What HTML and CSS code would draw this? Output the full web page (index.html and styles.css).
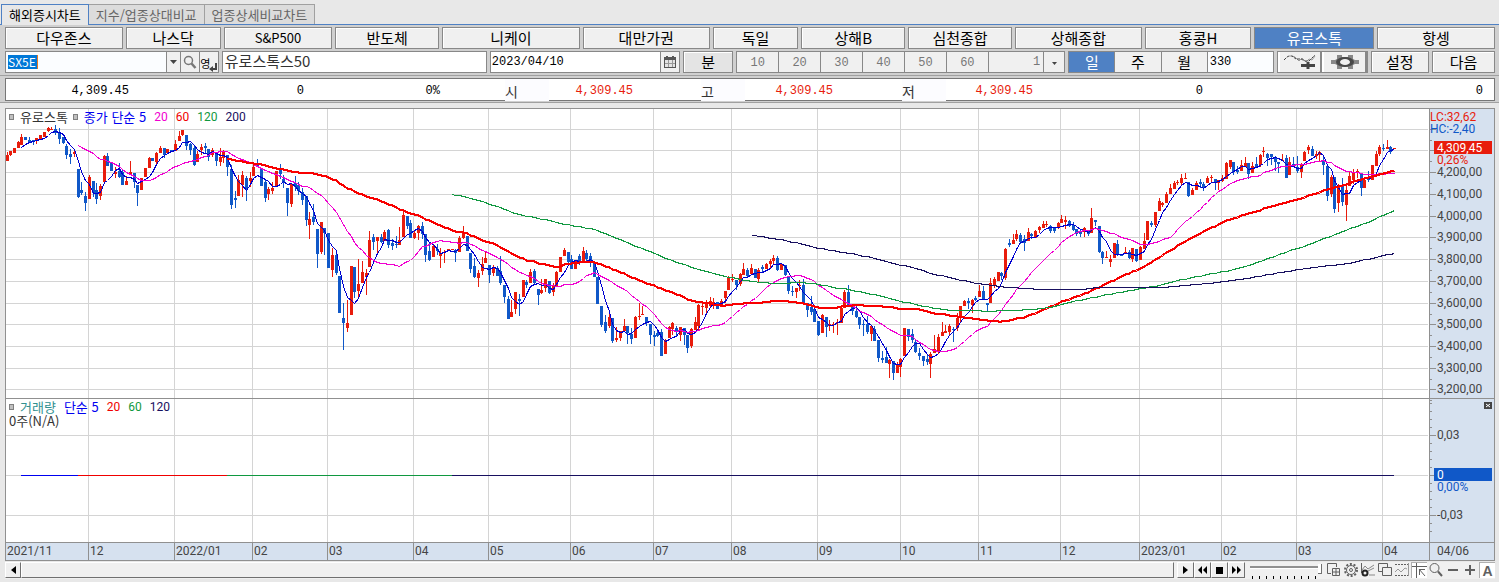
FILE: index.html
```html
<!DOCTYPE html>
<html lang="ko">
<head>
<meta charset="UTF-8" />
<title>해외증시차트</title>
<meta name="viewport" content="width=device-width, initial-scale=1">
<link rel="stylesheet" href="styles.css">
</head>
<body>

<nav class="tabs">
    <a href="#" class="tab active">해외증시차트</a>
    <a href="#" class="tab">지수/업종상대비교</a>
    <a href="#" class="tab">업종상세비교차트</a>
</nav>

<div class="toolbar">
    <div class="markets">
        <button>다우존스</button>
        <button>나스닥</button>
        <button class="latin">S&amp;P500</button>
        <button>반도체</button>
        <button>니케이</button>
        <button>대만가권</button>
        <button>독일</button>
        <button>상해B</button>
        <button>심천종합</button>
        <button>상해종합</button>
        <button>홍콩H</button>
        <button class="on">유로스톡</button>
        <button>항셍</button>
    </div>

    <div class="controls">
        <div class="group symbol">
            <label class="symbol-field"><input type="text" value="SX5E" size="4" aria-label="종목코드"></label>
            <button class="drop" aria-label="목록"><svg width="7" height="4"><path d="M0 0h7L3.500 4z" fill="#444"/></svg></button>
            <button class="search" aria-label="검색">
                <svg width="14" height="14" fill="none" stroke="#777"><circle cx="5.500" cy="5.500" r="4" stroke-width="1.500"/><path d="M8.500 8.500l4 4.500" stroke-width="2.500"/></svg>
            </button>
            <button class="lang" aria-label="영문 전환"><span>영</span><svg width="8" height="9"><path d="M6 0h2v7H4v2L0 6l4-3v2h2z" fill="#444"/></svg></button>
        </div>
        <input class="box name" type="text" value="유로스톡스50" aria-label="종목명">
        <div class="group date">
            <input type="text" value="2023/04/10" aria-label="일자">
            <button aria-label="달력"><svg width="12" height="12" shape-rendering="crispEdges"><path d="M0 1h2V0h2v1h4V0h2v1h2v11H0z" fill="#555"/><path d="M1 4h10v7H1z" fill="#e4e4e4"/><path d="M4 4v7M8 4v7M1 7.500h10" stroke="#999"/></svg></button>
        </div>
        <button class="box minute">분</button>
        <div class="group minutes">
            <button disabled>10</button>
            <button disabled>20</button>
            <button disabled>30</button>
            <button disabled>40</button>
            <button disabled>50</button>
            <button disabled>60</button>
            <input type="text" value="1" disabled aria-label="분 간격">
            <button class="drop" aria-label="분 선택"><svg width="5" height="3"><path d="M0 0h5L2.500 3z" fill="#444"/></svg></button>
        </div>
        <div class="group period">
            <button class="on">일</button>
            <button>주</button>
            <button>월</button>
            <input type="text" value="330" aria-label="조회 개수">
        </div>
        <div class="group tools">
            <button aria-label="지표 추가">
                <svg width="34" height="16" fill="none"><path d="M9 2l3 1 4 4 3-3 4 4 3-3 3 1 3-4" stroke="#999"/><path d="M1 6l3-3 2-1h3l4 3M14 5h4l4 2h4l6-6" stroke="#444" stroke-dasharray="3 1"/><path d="M25 8v7M18 11.500h14" stroke="#444" stroke-width="3"/></svg>
            </button>
            <button aria-label="차트 설정">
                <svg width="28" height="16"><path d="M6 1h5v2h6V1h5v4l2 1h4v4h-4l-2 1v4h-5v-2h-6v2H6v-4l-2-1H0V6h4l2-1z" fill="#888"/><ellipse cx="14" cy="8" rx="9" ry="5" fill="#484848"/><ellipse cx="14" cy="8" rx="5" ry="3" fill="#f0f0f0"/></svg>
            </button>
        </div>
        <button class="box setup">설정</button>
        <button class="box next">다음</button>
    </div>
</div>

<div class="quote-wrap">
    <div class="quote">
        <span>4,309.45</span>
        <span>0</span>
        <span>0%</span>
        <b>시</b>
        <span class="up">4,309.45</span>
        <b>고</b>
        <span class="up">4,309.45</span>
        <b>저</b>
        <span class="up">4,309.45</span>
        <span>0</span>
        <span>0</span>
    </div>
</div>

<main class="chart">
    <div class="panes">
        <div class="plot">
            <svg id="plot" viewBox="6 109 1423 433" preserveAspectRatio="none" shape-rendering="crispEdges"></svg>
            <div class="legend price">
                <i></i><span class="title">유로스톡</span><i></i>
                <span class="c5">종가 단순 5</span><span class="c20">20</span><span class="c60">60</span><span class="c120">120</span><span class="c200">200</span>
            </div>
            <div class="legend volume">
                <i></i><span class="teal">거래량</span>
                <span class="c5">단순 5</span><span class="c60">20</span><span class="c120">60</span><span class="c200">120</span>
                <p>0주(N/A)</p>
            </div>
        </div>
        <svg id="scale" class="scale" width="65" height="433" viewBox="1429 109 65 433"></svg>
    </div>
    <div class="dates">
        <div class="months" id="months"></div>
        <span class="last">04/06</span>
    </div>
</main>

<footer class="bottom">
    <button class="step" aria-label="왼쪽"><svg width="5" height="8"><path d="M5 0v8L0 4z"/></svg></button>
    <div class="track"></div>
    <div class="play">
        <button aria-label="오른쪽"><svg width="5" height="8"><path d="M0 0v8l5-4z"/></svg></button>
        <button aria-label="뒤로"><svg width="9" height="8"><path d="M4 0v8L0 4zM9 0v8L5 4z"/></svg></button>
        <button aria-label="정지"><svg width="7" height="7"><path d="M0 0h7v7H0z"/></svg></button>
        <button aria-label="앞으로"><svg width="9" height="8"><path d="M0 0v8l4-4zM5 0v8l4-4z"/></svg></button>
    </div>
    <input class="zoom" type="range" min="0" max="10" value="10" aria-label="확대">
    <div class="icons">
        <button aria-label="창 추가"><svg viewBox="0 0 16 16"><path d="M10.500 5V1.500h-9v10H5"/><path d="M6.500 6.500h7v7h-7zM10 6.500v7M6.500 10h7"/></svg></button>
        <button aria-label="환경"><svg viewBox="0 0 16 16"><circle cx="8" cy="8" r="6" stroke-dasharray="2 1.770" stroke-width="2"/><circle cx="8" cy="8" r="4.500"/><circle cx="8" cy="8" r="1.500"/></svg></button>
        <button aria-label="지표"><svg viewBox="0 0 16 16"><path d="M2 8l3-4 3 3 6-4M8 9l6-3M9 13h6" stroke="#888"/><path d="M1.500 1v10"/><circle cx="5" cy="11" r="2.500" stroke="#222" stroke-width="2"/></svg></button>
        <button aria-label="겹치기"><svg viewBox="0 0 16 16"><path d="M5 9.500H1.500v-8h9V5"/><path d="M5.500 5.500h9v8h-9z"/></svg></button>
        <button aria-label="추세"><svg viewBox="0 0 16 16"><path d="M1 2.500h13M1 13.500h13" stroke-dasharray="2 1"/><path d="M1 10l3-3 3 3 4-4 2 1M14.500 1v13" stroke="#999"/></svg></button>
        <button class="on" aria-label="십자선"><svg viewBox="0 0 16 16"><path d="M4.500 0v15M0 3.500h15M7 6l6 7M7.500 12V6.500H13"/></svg></button>
        <button aria-label="돋보기"><svg viewBox="0 0 16 16"><circle cx="6.500" cy="6" r="4.500"/><path d="M10 9.500l4 4.500" stroke-width="2"/></svg></button>
        <button aria-label="축소"><svg viewBox="0 0 16 16"><path d="M3 8h10" stroke-width="2"/></svg></button>
        <button aria-label="확대"><svg viewBox="0 0 16 16"><path d="M3 8h10M8 3v10" stroke-width="2"/></svg></button>
        <button class="on letter">A</button>
    </div>
</footer>

<script src="chart.js"></script>
</body>
</html>
```
FILE: styles.css
```css
* {
  box-sizing: border-box;
}
body {
  margin: 0;
  background-color: #e8e8e8;
  color: #000;
  font-family: 'Noto Sans CJK KR', sans-serif;
  font-size: 15px;
}
button, input {
  margin: 0;
  padding: 0;
  border: none;
  border-radius: 0;
  font: inherit;
  color: inherit;
  min-width: 0;
  outline: none;
}
button {
  display: flex;
  align-items: center;
  justify-content: center;
  background-color: #f0f0f0;
  line-height: 18px;
  white-space: nowrap;
}

/* tabs */
.tabs {
  display: flex;
  height: 25px;
  padding: 4px 0 0 1px;
  border-bottom: 1px solid #4f81c4;
}
.tab {
  height: 20px;
  padding: 0 7px;
  border: 1px solid #a0a0a0;
  border-left: none;
  border-bottom: none;
  background-color: #dcdcdc;
  color: #666;
  font-size: 13px;
  line-height: 19px;
  text-decoration: none;
}
.tab.active {
  height: 21px;
  border: 1px solid #4f81c4;
  border-bottom: none;
  background-color: #e8e8e8;
  color: #000;
}

/* toolbar */
.toolbar {
  display: grid;
  gap: 2px;
  padding: 2px 4px 2px 5px;
  background-color: #d0d0d0;
  border-bottom: 1px solid #a0a0a0;
}
.markets {
  display: grid;
  grid-template-columns: 118fr 95fr 109fr 104fr 138fr 127fr 86fr 104fr 104fr 127fr 107fr 120fr 118fr;
  gap: 3px;
}
.markets button, .box, .group {
  height: 22px;
  border: 1px solid #888;
}
.markets button, .minute, .setup, .next {
  box-shadow: inset 1px 1px #fff;
}
.markets .latin {
  font-size: 13px;
}
button.on, .markets .on {
  background-color: #4f81c4;
  color: #fff;
  box-shadow: none;
}
.controls {
  display: flex;
  gap: 3px;
}
.group {
  display: flex;
  background-color: #fff;
}
.group > * + * {
  border-left: 1px solid #888;
}
.controls input {
  background-color: #fff;
  line-height: 20px;
}
.symbol {
  flex: 215;
}
.symbol-field {
  flex: 1;
  display: flex;
  align-items: center;
  padding-left: 2px;
  background-color: #fbfdff;
}
.controls .symbol-field input {
  width: 30px;
  height: 14px;
  background-color: #0078d7;
  border-right: 1px solid #e87820;
  color: #fff;
  font-size: 12px;
  line-height: 14px;
}
.drop {
  width: 14px;
}
.search, .lang {
  width: 19px;
}
.lang {
  align-items: flex-end;
  font-size: 11px;
}
.lang span {
  width: 9px;
}
.name {
  flex: 265;
  padding: 0 0 3px 2px;
  color: #333;
}
.date {
  flex: 191;
}
.date input {
  flex: 1;
  padding-left: 1px;
  font: 12px 'Liberation Mono', monospace;
}
.date button {
  width: 19px;
}
.minute {
  flex: 49;
  background-color: #e4e4e4;
}
.minutes {
  flex: 332;
  color: #777;
  font: 12px 'Liberation Mono', monospace;
}
.minutes button {
  flex: 43;
  padding-top: 2px;
}
.minutes input {
  flex: 54;
  padding-right: 3px;
  background-color: #f0f0f0;
  text-align: right;
}
.minutes .drop {
  flex: 0 0 21px;
}
.period {
  flex: 207;
}
.period button {
  flex: 47;
}
.period input {
  flex: 66;
  padding-left: 2px;
  background-color: #fbfdff;
  font: 12px 'Liberation Mono', monospace;
}
.tools {
  flex: 90;
}
.tools button {
  flex: 1;
  border-left: 2px solid #fff;
  border-right: 2px solid #888;
}
.setup {
  flex: 57;
}
.next {
  flex: 62;
}

/* quote strip */
.quote-wrap {
  padding: 2px 4px 1px 5px;
  background-color: #d0d0d0;
  border-bottom: 1px solid #a0a0a0;
}
.quote {
  display: grid;
  grid-template-columns: 125fr 175fr 136fr 107fr 86fr 110fr 90fr 111fr 89fr 170fr 289fr;
  height: 23px;
  border: 1px solid #777;
  background-color: #fff;
  font: 12px/24px 'Liberation Mono', monospace;
  text-align: right;
}
.quote span {
  padding-right: 2px;
}
.quote span:last-child {
  padding-right: 11px;
}
.quote b {
  justify-self: end;
  width: 44px;
  height: 22px;
  background-color: #fcfcff;
  color: #333;
  font: 14px/24px 'Noto Sans CJK KR', sans-serif;
  text-align: left;
}
.up {
  color: #e81c0c;
}

/* chart */
.chart {
  margin: 5px 4px 0 5px;
  border: 1px solid #909090;
  background-color: #fff;
}
.panes {
  display: flex;
}
.plot {
  position: relative;
  flex: 1;
  height: 433px;
}
.plot svg {
  display: block;
  width: 100%;
  height: 433px;
}
.scale {
  display: block;
  flex: none;
  background-color: #d6e1ef;
  font: 12px Roboto, sans-serif;
}
.legend {
  position: absolute;
  left: 3px;
  display: flex;
  flex-wrap: wrap;
  align-items: center;
  width: 260px;
  font: 13px/16px 'Noto Sans CJK KR', sans-serif;
}
.legend.price {
  top: 0;
}
.legend.volume {
  top: 290px;
}
.legend i {
  width: 5px;
  height: 6px;
  margin-right: 6px;
  background-color: #c0c0c0;
  border: 1px solid #808080;
}
.legend span {
  margin-right: 8px;
}
.legend .title {
  margin-right: 5px;
  color: #333;
}
.legend .c20, .legend .c60, .legend .c120, .legend .c200 {
  font: 12px/16px Roboto, sans-serif;
}
.legend p {
  width: 100%;
  margin: 0;
  color: #333;
  line-height: 12px;
}
.c5 { color: #0000f0; }
.c20 { color: #f000d0; }
.c60 { color: #f00000; }
.c120 { color: #109840; }
.c200 { color: #181060; }
.teal { color: #309090; }

.dates {
  display: flex;
  height: 18px;
  border-top: 1px solid #909090;
  background-color: #d6e1ef;
  color: #444;
  font: 12px/16px Roboto, sans-serif;
}
.months {
  flex: 1;
  display: grid;
  grid-template-columns: 82fr 86fr 78fr 75fr 86fr 75fr 82fr 83fr 78fr 86fr 83fr 78fr 82fr 79fr 82fr 75fr 86fr 47fr;
}
.months span {
  min-width: 0;
  padding-left: 1px;
}
.months span + span {
  border-left: 1px solid #909090;
}
.last {
  width: 65px;
  padding-left: 7px;
  border-left: 1px solid #909090;
}

/* scroll and tool strip */
.bottom {
  display: flex;
  height: 17px;
  margin: 1px 4px 0 5px;
  background-color: #f0f0f0;
}
.step, .track, .play button {
  height: 16px;
  border: 1px solid #fff;
  border-right-color: #707070;
  border-bottom-color: #707070;
  background-color: #f0f0f0;
}
.step {
  width: 16px;
}
.track {
  flex: 1;
}
.play {
  display: flex;
  margin-left: 3px;
}
.play button {
  width: 17px;
}
.zoom {
  appearance: none;
  width: 72px;
  height: 17px;
  margin: 0 4px 0 5px;
  background: repeating-linear-gradient(90deg, transparent 0 2px, #000 2px 3px, transparent 3px 7px) 0 14px / 66px 3px no-repeat;
}
.zoom::-webkit-slider-runnable-track {
  height: 3px;
  margin-bottom: 6px;
  background-color: #909090;
  border-bottom: 1px solid #fff;
}
.zoom::-webkit-slider-thumb {
  appearance: none;
  width: 4px;
  height: 10px;
  margin-top: -2px;
  background-color: #fff;
  border-right: 1px solid #707070;
  border-bottom: 1px solid #707070;
}
.icons {
  display: flex;
  gap: 1px;
}
.icons button {
  width: 16px;
  height: 16px;
}
.icons svg {
  flex: none;
  width: 16px;
  height: 16px;
  fill: none;
  stroke: #606060;
}
.icons .on {
  background-color: #fff;
  border: 1px solid #b0b0b0;
  border-right: none;
  border-bottom: none;
}
.icons .letter {
  color: #606060;
  font: bold 14px/14px 'Liberation Sans', sans-serif;
}
```
FILE: chart.js
```js
// one day per entry: r = up / b = down, then high, top, bottom, low in plot pixels
const days = `
r152,155,161,161 r151,151,155,156 r148,148,153,153 r141,142,148,148 r134,137,145,145 b137,137,140,140
b137,140,142,142 b140,140,142,145 r138,138,141,144 r135,135,139,139 r132,132,137,137 r127,128,131,132
r127,129,130,130 b125,129,133,135 b128,132,139,144 b137,137,143,144 b144,146,155,159 b149,154,157,164
r149,152,154,157 b169,169,197,198 b182,190,193,195 b192,196,203,211 r175,177,199,199 b181,181,193,197
b183,190,199,204 r184,186,196,200 r155,156,182,182 b153,156,166,166 b163,163,171,171 r167,172,174,178
b163,171,177,178 b170,172,185,185 r176,181,185,185 r161,172,174,174 b173,173,182,188 b185,185,193,206
r178,178,190,190 r168,168,177,177 r157,158,168,168 b158,158,161,161 r152,153,162,164 r146,148,153,153
b148,148,155,158 r149,149,153,153 b150,150,152,152 r140,144,151,151 r131,136,141,141 r130,130,135,136
b135,135,146,150 b143,144,150,155 b146,148,165,166 r151,154,162,162 r144,147,150,155 b143,146,148,154
b149,149,157,161 r148,150,155,157 b152,152,161,166 r148,157,162,166 r150,152,158,163 b155,155,167,176
b165,169,205,209 b191,198,200,208 r175,180,196,196 r171,175,185,197 b176,178,188,201 r172,178,181,187
r165,167,176,176 b159,163,167,167 b169,169,186,186 b179,182,198,202 r187,189,194,200 r182,188,191,194
r171,171,186,186 b164,170,174,179 b175,179,183,188 b188,188,203,216 r184,184,204,207 b176,183,187,191
b182,185,191,195 b188,192,200,205 b196,196,220,226 r212,219,225,239 b204,217,222,225 b229,229,254,268
r222,222,252,254 b228,228,233,255 b233,233,268,268 r248,255,270,277 b250,255,273,275 b276,276,313,313
b303,318,323,350 r300,323,328,332 r266,266,315,315 b267,267,292,298 r259,284,291,297 r261,272,283,283
r269,273,277,295 r231,240,267,267 b234,237,242,250 r237,237,241,254 b234,237,242,243 r230,232,241,241
b229,230,245,248 b239,243,246,250 b236,244,245,248 r227,240,245,245 r210,215,237,237 b216,216,226,229
b220,223,238,238 r230,233,238,239 r225,226,233,240 b222,226,234,239 b234,234,255,262 b242,251,260,261
r244,246,257,257 b244,249,251,255 r248,253,256,268 r250,252,253,263 r249,249,250,250 r249,249,250,250
b249,250,253,262 r236,238,252,252 r226,233,238,239 b236,236,251,251 b253,253,269,273 b258,266,277,278
r270,273,278,287 r257,264,271,275 r251,258,263,263 b265,265,275,283 r265,267,273,276 b266,268,276,276
b256,271,283,285 b285,285,297,303 b296,299,319,319 r300,312,317,317 r292,292,309,314 b294,299,301,316
r280,280,297,297 b280,282,285,288 r269,272,283,283 b269,271,283,285 b289,289,295,305 r279,290,293,294
r279,279,288,292 b281,281,293,294 r283,286,292,296 r271,272,287,287 r257,257,272,272 r248,250,256,256
b252,252,262,264 b255,259,269,269 r260,261,269,269 b254,256,263,265 r247,251,262,262 b250,253,259,263
b253,256,262,267 b263,263,277,277 b277,277,304,304 b306,306,325,327 b315,322,331,333 r314,317,326,328
b318,318,341,343 r327,338,340,342 r331,331,338,341 r319,326,331,331 b326,326,333,344 b328,334,339,344
r316,317,338,338 r303,316,317,320 r306,314,315,315 b317,317,322,326 b324,324,335,344 b331,335,337,346
b330,333,336,337 b329,332,356,356 r339,341,354,354 r326,327,338,338 r322,323,329,335 b326,328,332,336
r327,327,335,341 b328,328,335,345 b335,335,348,353 r328,329,346,348 r317,322,330,330 r304,305,326,331
r301,306,307,315 r300,303,308,313 r297,301,306,308 r298,302,305,309 b302,302,309,309 r299,301,307,307
r291,291,298,303 r276,277,290,290 r274,279,280,282 b280,280,285,290 r273,274,284,286 r263,269,275,275
b268,270,276,278 r264,268,274,274 b269,269,278,278 r268,270,279,283 b265,267,269,273 r263,264,269,269
r259,261,264,268 r255,258,261,264 b256,258,270,271 r263,264,270,270 b265,265,275,276 b276,276,291,294
b286,291,292,296 r288,288,292,298 r280,285,286,291 b279,285,304,305 b303,303,310,317 b296,307,312,315
b306,309,322,322 b321,321,335,336 r314,315,333,333 b317,317,327,337 r320,324,326,331 r322,324,325,333
r319,322,323,335 r307,308,323,323 r290,292,308,308 b285,292,307,307 b304,305,311,315 b306,311,317,318
b317,317,325,329 b320,324,325,336 b316,324,332,334 r325,326,334,341 b326,329,341,341 b340,340,358,362
b351,358,360,363 b347,357,363,363 r359,360,364,378 b361,361,373,380 r362,364,373,373 r358,359,367,377
r328,328,356,356 b329,329,337,341 b329,334,340,343 b339,342,352,353 b348,353,356,360 b356,356,361,366
b354,359,362,365 r352,354,364,378 r335,349,353,353 r334,337,351,354 r322,332,336,336 r325,331,333,333
r324,326,332,335 b327,329,330,342 r313,318,328,331 r306,306,317,322 r300,301,306,306 b298,301,303,309
r299,300,305,313 b296,298,300,301 r285,291,297,297 b286,291,299,299 b303,303,305,312 r278,283,303,303
r277,279,286,288 r272,272,281,281 b272,273,276,280 r248,249,278,280 b239,243,245,247 r234,240,244,244
r230,234,239,241 b233,235,242,244 b235,239,243,251 r228,232,241,241 b233,234,236,239 r230,231,238,238
r226,227,230,233 r221,224,228,228 r221,224,225,227 b225,226,231,233 b227,227,231,233 r222,223,228,229
r215,219,223,223 r216,220,222,229 b220,221,226,227 b222,225,230,231 b229,229,234,236 b229,231,234,237
r227,228,232,237 b230,230,234,236 r208,218,233,233 b220,220,222,226 b226,226,252,253 b251,252,258,264
r251,257,258,258 r255,259,262,267 r243,243,258,258 b240,244,255,256 b254,254,256,256 r247,252,253,254
b250,252,258,259 r248,248,259,262 b249,249,261,262 r246,247,260,260 r233,241,249,249 r221,221,240,240
b221,223,225,227 r212,212,225,227 r198,201,211,211 r202,203,205,207 r192,194,203,203 r184,188,194,194
r181,183,189,189 r180,182,183,185 r174,178,183,186 r173,178,179,179 b182,182,196,197 r188,190,195,195
r181,183,190,190 b179,182,184,188 b182,184,188,191 r176,178,183,183 r175,177,178,183 b179,179,182,190
r180,180,183,190 r175,178,181,182 r162,163,179,179 r160,160,167,169 b162,162,172,175 b166,170,172,174
r160,165,171,171 r157,163,167,167 b163,163,174,179 r162,166,173,173 b157,164,167,167 r154,155,165,167
r147,151,152,157 b153,154,158,166 b154,154,157,165 b156,158,162,171 b162,162,164,173 r154,160,161,161
b155,158,178,178 r157,162,175,175 b157,164,167,167 b156,167,171,173 r163,164,172,178 r151,152,161,161
r145,147,150,154 b146,149,156,156 r151,154,156,159 r151,152,155,162 b155,160,165,175 b166,166,196,201
r175,177,194,197 b177,177,209,213 r184,186,203,212 b178,185,202,206 r184,190,205,221 r171,176,186,186
r169,173,180,184 r169,171,173,178 b174,174,188,196 r179,180,188,188 b171,178,180,182 r165,165,180,180
r151,154,166,166 r145,147,154,156 b144,148,149,151 r140,147,149,149 b146,147,152,154 r148,148,149,149
`.trim().split(/\s+/).map((d, i) => {
    const [high, top, bottom, low] = d.slice(1).split(',').map(Number);
    return { up: d[0] === 'r', high, top, bottom, low, x: Math.floor(7 + i * 3.7405) };
});

const monthX = [88, 174, 252, 327, 413, 488, 570, 653, 731, 817, 900, 978, 1060, 1139, 1221, 1296, 1382];
const monthNames = ['2021/11', '12', '2022/01', '02', '03', '04', '05', '06', '07', '08', '09', '10', '11', '12', '2023/01', '02', '03', '04'];
const priceY = [129, 150, 172, 194, 216, 237, 259, 281, 303, 324, 346, 368, 389];

function candles(up) {
    return days.filter(d => d.up === up).map(d =>
        `M${d.x - 1} ${d.top}h3V${d.bottom}h-3zM${d.x} ${d.high}h1V${d.low}h-1z`
    ).join('');
}

function average(n) {
    const close = days.map(d => d.up ? d.top : d.bottom);
    const points = [];
    for (let i = n - 1; i < days.length; i++) {
        const sum = close.slice(i - n + 1, i + 1).reduce((a, b) => a + b, 0);
        points.push(`${days[i].x + 0.5},${Math.round(sum / n) + 0.5}`);
    }
    return points.join(' ');
}

function line(n, color, width) {
    return `<polyline points="${average(n)}" fill="none" stroke="${color}" stroke-width="${width}"/>`;
}

let grid = '';
monthX.forEach(x => grid += `M${x}.5 109V542`);
priceY.concat(435, 475, 515).forEach(y => grid += `M6 ${y}.5H1428`);

document.getElementById('plot').innerHTML = `
    <path d="${grid}" stroke="#d4d4d4"/>
    <path d="M6 398.5H1429" stroke="#909090"/>
    <path d="${candles(true)}" fill="#e81c0c"/>
    <path d="${candles(false)}" fill="#1058c8"/>
    ${line(5, '#0000d0', 1)}
    ${line(20, '#f000d0', 1)}
    ${line(60, '#f80000', 2)}
    ${line(120, '#109840', 1)}
    ${line(200, '#181060', 1)}
    <path d="M21 475.5H78" stroke="#0000f0"/>
    <path d="M78 475.5H227" stroke="#f00000"/>
    <path d="M227 475.5H452" stroke="#109840"/>
    <path d="M452 475.5H1394" stroke="#181060"/>`;

// right hand scale
let ticks = 'M1429.5 109V542M1429 398.5H1494';
let labels = '';
priceY.forEach((y, i) => {
    ticks += `M1430 ${y}.5h6M1430 ${y + 11}.5h2`;
    if (i > 1) labels += `<text x="1437" y="${y + 4}">${Math.floor((44 - i) / 10)},${(44 - i) % 10}00,00</text>`;
});
for (let y = 403; y < 532; y += 8) ticks += `M1430 ${y}.5h${(y - 435) % 40 === 0 ? 6 : 2}`;

document.getElementById('scale').innerHTML = `
    <path d="${ticks}" stroke="#909090" shape-rendering="crispEdges"/>
    <g fill="#444">${labels}<text x="1437" y="439">0,03</text><text x="1437" y="519">-0,03</text></g>
    <text x="1430" y="121" fill="#e81c0c">LC:32,62</text>
    <text x="1430" y="133" fill="#1058c8">HC:-2,40</text>
    <path d="M1434 141h58v13h-58z" fill="#e81c0c"/>
    <text x="1437" y="152" fill="#fff">4,309,45</text>
    <text x="1437" y="164" fill="#e81c0c">0,26%</text>
    <path d="M1434 468h58v13h-58z" fill="#1058c8"/>
    <text x="1437" y="479" fill="#fff">0</text>
    <text x="1437" y="491" fill="#1058c8">0,00%</text>
    <path d="M1484 402h8v7h-8z" fill="#444"/>
    <path d="M1486 404l4 3M1490 404l-4 3" stroke="#fff"/>`;

document.getElementById('months').innerHTML = monthNames.map(m => `<span>${m}</span>`).join('');
```
